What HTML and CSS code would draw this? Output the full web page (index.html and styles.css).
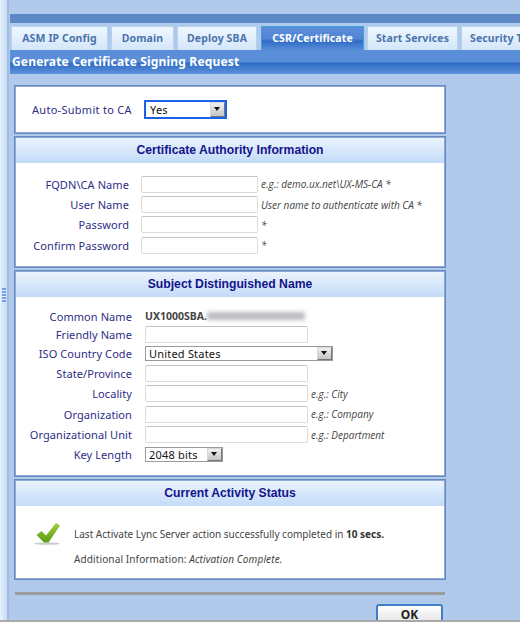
FILE: index.html
```html
<!DOCTYPE html>
<html>
    <head>
        <title>Generate Certificate Signing Request</title>
        <link rel="stylesheet" href="styles.css">
    </head>
    <body>
        <div id="sidebar"><div class="grip"></div></div>
        <div id="main">
            <div id="topband"></div>
            <div id="tabs">
                <div class="tab tab1">ASM IP Config</div>
                <div class="tab tab2">Domain</div>
                <div class="tab tab3">Deploy SBA</div>
                <div class="tab tab4 active">CSR/Certificate</div>
                <div class="tab tab5">Start Services</div>
                <div class="tab tab6">Security Tools</div>
            </div>
            <div id="title">Generate Certificate Signing Request</div>
            <div id="body">
                <div class="panel" id="submit">
                    <span class="label">Auto-Submit to CA</span>
                    <div class="select focus s1">Yes<span class="arrow"></span></div>
                </div>
                <div class="panel" id="authority">
                    <div class="head">Certificate Authority Information</div>
                    <div class="form form1">
                        <span class="label">FQDN\CA Name</span><div class="input"></div><span class="hint">e.g.: demo.ux.net\UX-MS-CA *</span>
                        <span class="label">User Name</span><div class="input"></div><span class="hint">User name to authenticate with CA *</span>
                        <span class="label">Password</span><div class="input"></div><span class="hint">*</span>
                        <span class="label">Confirm Password</span><div class="input"></div><span class="hint">*</span>
                    </div>
                </div>
                <div class="panel" id="subject">
                    <div class="head">Subject Distinguished Name</div>
                    <div class="form form2">
                        <span class="label">Common Name</span><div class="common">UX1000SBA.<span class="smudge"></span></div><span></span>
                        <span class="label">Friendly Name</span><div class="input"></div><span></span>
                        <span class="label">ISO Country Code</span><div class="select s2">United States<span class="arrow"></span></div><span></span>
                        <span class="label">State/Province</span><div class="input"></div><span></span>
                        <span class="label">Locality</span><div class="input"></div><span class="hint">e.g.: City</span>
                        <span class="label">Organization</span><div class="input"></div><span class="hint">e.g.: Company</span>
                        <span class="label">Organizational Unit</span><div class="input"></div><span class="hint">e.g.: Department</span>
                        <span class="label">Key Length</span><div class="select s3">2048 bits<span class="arrow"></span></div><span></span>
                    </div>
                </div>
                <div class="panel" id="status">
                    <div class="head">Current Activity Status</div>
                    <div class="result">
                        <svg class="check" width="28" height="24" viewBox="0 0 28 24">
                            <defs>
                                <linearGradient id="green" x1="0" y1="0" x2="0" y2="1">
                                    <stop offset="0" stop-color="#a4cf3c"/>
                                    <stop offset="1" stop-color="#5c9a18"/>
                                </linearGradient>
                            </defs>
                            <ellipse cx="13" cy="21.6" rx="13" ry="1.2" fill="#c8ccc8"/>
                            <path d="M2.5 13 L7.5 9 L12 13.5 L22 1 L26 3.5 L14.5 20.5 L10 20.5 Z" fill="url(#green)"/>
                        </svg>
                        <div class="msgs">
                            <p>Last Activate Lync Server action successfully completed in <b>10 secs.</b></p>
                            <p class="extra">Additional Information: <i>Activation Complete.</i></p>
                        </div>
                    </div>
                </div>
                <div id="rule"></div>
                <div id="actions"><button id="ok" type="button">OK</button></div>
            </div>
        </div>
        <div id="pageline"></div>
    </body>
</html>
```
FILE: styles.css
```css
html, body{
    margin: 0;
    height: 622px;
    overflow: hidden;
}
body{
    display: flex;
    background-color: #b1c9eb;
    font-family: "Noto Sans", sans-serif;
    font-size: 11px;
}
#sidebar{
    width: 7px;
    flex: none;
    display: flex;
    align-items: center;
    margin-right: 1px;
    background: linear-gradient(to right, #e6f1fc, #c6dcf6);
    border-right: 2px solid #a3bbdf;
}
.grip{
    width: 4px;
    height: 14px;
    margin: 0 0 32px 2px;
    background: radial-gradient(circle at 1px 1px, #6f9fe0 .8px, #eaf3fd 1px) 0 0 / 2px 3px;
}
#main{
    flex: 1;
    min-width: 0;
    overflow: hidden;
}
#topband{
    height: 14px;
    border-bottom: 9px solid #5d88c6;
    background-color: #b1c9eb;
}
#tabs{
    display: flex;
    height: 24px;
    margin-top: 3px;
    padding-left: 1px;
    background-color: #b1c9eb;
    white-space: nowrap;
}
.tab{
    flex: none;
    box-sizing: border-box;
    height: 24px;
    line-height: 22px;
    text-align: center;
    font-weight: bold;
    font-size: 10.5px;
    letter-spacing: .12px;
    color: #4a74ab;
    background: linear-gradient(to bottom, #f0f7fe, #d3e6fa);
    border: 1px solid #b5d3f0;
    border-bottom: none;
}
.tab1{ width: 97px; margin-right: 3px; }
.tab2{ width: 63px; margin-right: 3px; }
.tab3{ width: 80px; margin-right: 4px; }
.tab4{ width: 103px; margin-right: 3px; }
.tab5{ width: 91px; margin-right: 3px; }
.tab6{ width: 90px; text-align: left; padding-left: 8px; }
.tab.active{
    color: #fff;
    background: linear-gradient(to bottom, #5b8cd6 0, #5286d4 50%, #2f6cc6 62%, #5a8ed8 100%);
    border: 1px solid #3fa0e0;
    border-bottom: none;
}
#title{
    height: 24px;
    line-height: 24px;
    padding-left: 2px;
    box-sizing: border-box;
    font-size: 12px;
    font-weight: bold;
    letter-spacing: .17px;
    color: #fff;
    background: linear-gradient(to bottom, #5a8ed8 0, #5a8ed8 48%, #2f6cc6 55%, #5e92da 100%);
}
#body{
    width: 436px;
    padding: 11px 0 0 4px;
}
.panel{
    box-sizing: border-box;
    width: 432px;
    margin-bottom: 2px;
    background-color: #fff;
    border: 1px solid #6688bf;
    outline: 1px solid #8faad6;
    outline-offset: -2px;
    padding: 1px;
}
#submit{
    height: 49px;
    display: flex;
    align-items: center;
    padding-left: 17px;
}
#submit .label{
    width: 112px;
    text-align: left;
    letter-spacing: .28px;
}
#authority{ height: 132px; }
#subject{ height: 207px; }
#status{ height: 101px; }
.head{
    height: 25px;
    line-height: 25px;
    text-align: center;
    font-family: "Liberation Sans", sans-serif;
    font-size: 12.2px;
    font-weight: bold;
    color: #14148c;
    background: linear-gradient(to bottom, #eaf3fd, #c4dbf8);
}
.label{
    color: #2d2d86;
    text-align: right;
    letter-spacing: .08px;
    white-space: nowrap;
}
.form{
    display: grid;
    align-items: center;
    white-space: nowrap;
}
.form1{
    grid-template-columns: 125px 120px auto;
    grid-auto-rows: 20.4px;
    padding-top: 10px;
    margin-top: 1px;
}
.form2{
    grid-template-columns: 129px 166px auto;
    grid-template-rows: 18px 19px 19.5px 20px 20.5px 20.5px 20px 20px;
    padding-top: 10px;
}
.form .label{ padding-right: 12px; }
.form2 .label{ padding-right: 13px; }
.input{
    box-sizing: border-box;
    height: 17px;
    background-color: #fff;
    border: 1px solid #dcdcd8;
    border-top-color: #c4c4c4;
    border-radius: 2px;
}
.form1 .input{ width: 117px; }
.form2 .input{ width: 163px; }
.hint{
    font-family: "Open Sans", sans-serif;
    font-style: italic;
    font-size: 10px;
    color: #444;
}
.select{
    box-sizing: border-box;
    position: relative;
    height: 15px;
    line-height: 13px;
    padding-left: 3px;
    color: #111;
    background-color: #fff;
    border: 1px solid #9a9a9a;
    letter-spacing: .2px;
}
.s1{
    width: 83px;
    height: 19px;
    line-height: 15px;
    padding-left: 4px;
    border: 2px solid #1c62e4;
}
.s2{ width: 188px; }
.s3{ width: 78px; }
.arrow{
    position: absolute;
    top: 0;
    right: 0;
    width: 15px;
    height: 13px;
    box-sizing: border-box;
    background: linear-gradient(#f0f0f0, #c4c4c4);
    border: 1px solid #d8d8d8;
    border-right-color: #777;
    border-bottom-color: #777;
}
.arrow::after{
    content: "";
    position: absolute;
    left: 3px;
    top: 3px;
    border: 3.5px solid transparent;
    border-top: 4px solid #111;
    border-bottom: none;
}
.s1 .arrow{ height: 15px; top: 0; }
.s1 .arrow::after{ top: 4px; }
.common{
    display: flex;
    align-items: center;
    font-weight: bold;
    font-size: 10.5px;
    color: #444;
}
.smudge{
    width: 98px;
    height: 8px;
    background: #bcbcc0;
    filter: blur(2px);
}
.result{
    display: flex;
    align-items: flex-start;
    padding: 21px 0 0 18px;
    color: #444;
}
.check{ flex: none; margin-right: 12px; margin-top: -5px; }
.msgs p{
    margin: 0 0 10px;
    font-size: 10px;
    line-height: 15px;
    white-space: nowrap;
}
.msgs .extra{ letter-spacing: .12px; }
.msgs b{ color: #333; }
#rule{
    width: 430px;
    height: 3px;
    margin: 12px 0 0 1px;
    background-color: #9a9c9e;
}
#actions{
    display: flex;
    justify-content: flex-end;
    width: 429px;
    margin-top: 9px;
}
#ok{
    width: 67px;
    height: 24px;
    padding: 0 0 5px;
    font-family: "Noto Sans", sans-serif;
    font-size: 12px;
    font-weight: bold;
    color: #222;
    background: linear-gradient(#fff, #ddd);
    border: 2px solid #3f7fc6;
    border-radius: 3px;
}
#pageline{
    position: fixed;
    left: 0;
    right: 0;
    bottom: 0;
    height: 2px;
    background-color: #a9a9a9;
}
```
